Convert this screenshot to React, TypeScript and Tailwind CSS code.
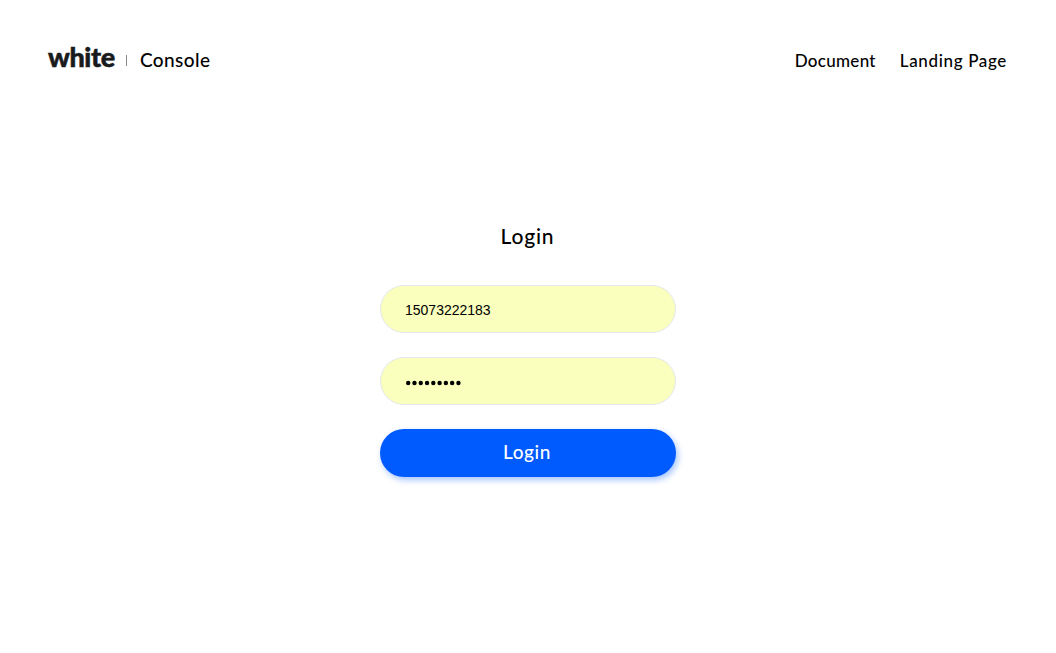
import React from "react";

function Header() {
  return (
    <header className="flex h-[120px] items-center justify-between pl-12 pr-[49px]">
      <div className="flex items-center">
        <span className="w-[67px] -mt-[7px] whitespace-nowrap text-[27px] leading-8 font-black tracking-[-0.4px] text-[#191a1c] [-webkit-text-stroke:0.5px_#191a1c]">
          white
        </span>
        <span className="ml-[11px] h-[11px] w-px bg-[#8a8a8a]" />
        <span className="ml-[13px] whitespace-nowrap text-[19px] leading-6 tracking-[0.4px]">Console</span>
      </div>
      <nav className="flex gap-6 pt-px text-[17px] leading-6 whitespace-nowrap">
        <a className="tracking-[0.3px]">Document</a>
        <a className="tracking-[0.65px]">Landing Page</a>
      </nav>
    </header>
  );
}

function PasswordDots() {
  return (
    <svg width="58" height="6" viewBox="0 0 58 6" fill="#000">
      {Array.from({ length: 9 }, (_, i) => (
        <circle key={i} cx={3.2 + i * 6.28} cy={3} r={2.2} />
      ))}
    </svg>
  );
}

function LoginForm() {
  return (
    <main className="mx-auto flex w-[296px] flex-col pt-[101px]">
      <h1 className="pr-px text-center text-[21px] leading-[30px] tracking-[0.8px] font-medium">Login</h1>
      <div className="mt-[34px] flex h-12 items-center rounded-full border border-[#e4e8ec] bg-[#faffbd] px-6 pt-[2px] font-['Liberation_Sans',sans-serif] text-[14px]">
        15073222183
      </div>
      <div className="mt-6 flex h-12 items-center rounded-full border border-[#e4e8ec] bg-[#faffbd] px-6 pt-1">
        <PasswordDots />
      </div>
      <button className="mt-6 h-12 rounded-full bg-[#005bff] pr-2 pb-[2px] pl-[6px] text-[19px] tracking-[0.6px] text-white shadow-[2px_3px_6px_rgba(0,91,255,0.36)]">
        Login
      </button>
    </main>
  );
}

export default function App() {
  return (
    <div className="h-[653px] bg-white font-['Lato',sans-serif] font-medium text-black">
      <Header />
      <LoginForm />
    </div>
  );
}
